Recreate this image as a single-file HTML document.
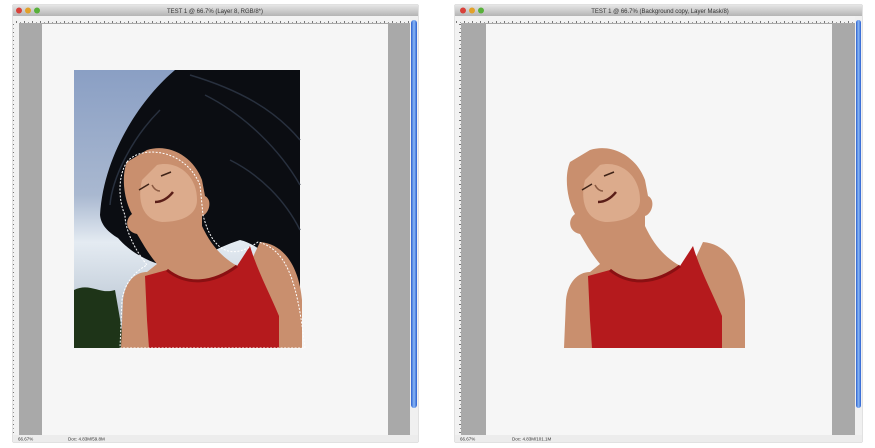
<!DOCTYPE html>
<html><head><meta charset="utf-8"><style>
html,body{margin:0;padding:0;background:#fff;width:875px;height:448px;overflow:hidden}
svg{display:block}
text{font-family:"Liberation Sans",sans-serif}
</style></head><body>
<svg width="875" height="448" viewBox="0 0 875 448" xmlns="http://www.w3.org/2000/svg">
<defs>
<linearGradient id="tb" x1="0" y1="0" x2="0" y2="1"><stop offset="0" stop-color="#e6e6e6"/><stop offset="1" stop-color="#b4b4b4"/></linearGradient>
<linearGradient id="th" x1="0" y1="0" x2="1" y2="0"><stop offset="0" stop-color="#2a5fd0"/><stop offset=".5" stop-color="#8ab8f5"/><stop offset="1" stop-color="#2a5fd0"/></linearGradient>
<linearGradient id="sky" x1="0" y1="0" x2="0" y2="1"><stop offset="0" stop-color="#8a9fc4"/><stop offset=".45" stop-color="#a9b8d0"/><stop offset=".62" stop-color="#e4ebf2"/><stop offset=".8" stop-color="#c9d3de"/><stop offset="1" stop-color="#9aa6b0"/></linearGradient>
<pattern id="rul" width="8" height="8" patternUnits="userSpaceOnUse"><rect width="8" height="8" fill="#f2f2f2"/><rect x="0" y="5" width="1" height="3" fill="#777"/><rect x="4" y="6" width="1" height="2" fill="#999"/></pattern>
<pattern id="rulv" width="8" height="8" patternUnits="userSpaceOnUse"><rect width="8" height="8" fill="#f2f2f2"/><rect y="0" x="3" height="1" width="3" fill="#777"/><rect y="4" x="4" height="1" width="2" fill="#999"/></pattern>
<g id="person">
<path d="M590,150 C612,143 636,156 645,180 L648,196 C656,200 652,214 645,216 L645,226 C656,250 672,264 690,270 L703,242 C728,244 742,268 745,300 L745,348 L564,348 L566,300 C568,282 578,272 590,272 L600,264 C590,252 585,242 580,234 C569,232 567,220 575,214 C567,200 564,176 570,162 Z" fill="#c98f6e"/>
<path d="M600,165 C620,160 640,175 640,200 C640,215 625,222 605,222 C585,220 580,200 585,180 Z" fill="#dcab8c"/>
<path d="M588,276 L610,270 C630,286 656,284 680,266 L693,246 C700,270 712,292 722,316 L722,348 L592,348 L590,320 Z" fill="#b51a1d"/>
<path d="M610,270 C630,286 656,284 680,266" stroke="#8a1012" stroke-width="3" fill="none"/>
<path d="M582,190 l10,-6 M604,176 l10,-4" stroke="#402418" stroke-width="1.5"/>
<path d="M598,202 q10,0 18,-10" stroke="#5a1e18" stroke-width="2.5" fill="none"/>
<path d="M595,185 q3,6 8,6" stroke="#8a5a42" stroke-width="1.5" fill="none"/>
</g>
</defs>

<!-- LEFT WINDOW -->
<rect x="13" y="5" width="405" height="437" fill="#a8a8a8" stroke="#888" stroke-width=".5"/>
<rect x="13" y="5" width="405" height="11" fill="url(#tb)"/>
<circle cx="19" cy="10.5" r="3" fill="#d9413a"/><circle cx="28" cy="10.5" r="3" fill="#e2a12a"/><circle cx="37" cy="10.5" r="3" fill="#58b03a"/>
<text x="215" y="13" font-size="6" fill="#333" text-anchor="middle">TEST 1 @ 66.7% (Layer 8, RGB/8*)</text>
<rect x="13" y="16" width="397" height="7" fill="url(#rul)"/>
<rect x="13" y="23" width="6" height="412" fill="url(#rulv)"/>
<rect x="19" y="23" width="391" height="412" fill="#a9a9a9"/>
<rect x="42" y="24" width="346" height="411" fill="#f6f6f6"/>
<rect x="410" y="16" width="8" height="419" fill="#f0f0f0"/>
<rect x="411" y="20" width="6" height="388" rx="3" fill="url(#th)"/>
<rect x="13" y="435" width="405" height="7" fill="#ececec"/>
<text x="18" y="440.5" font-size="4.5" fill="#333">66.67%</text>
<text x="68" y="440.5" font-size="4.5" fill="#333">Doc: 4.83M/59.8M</text>
<!-- photo -->
<rect x="74" y="70" width="226" height="278" fill="url(#sky)"/>
<path d="M74,290 C90,282 100,295 115,290 L125,348 L74,348 Z" fill="#1e3418"/>
<path d="M100,215 C104,150 145,95 175,70 L300,70 L300,300 C285,270 262,245 240,240 C215,248 195,262 175,268 C150,264 130,252 118,238 C108,232 101,225 100,215 Z" fill="#0b0d12"/>
<path d="M190,75 C240,90 275,110 300,140 M205,95 C245,115 280,150 300,185 M230,160 C260,175 285,200 300,230 M110,205 C112,180 130,140 160,110" stroke="#28303e" stroke-width="1.5" fill="none"/>
<use href="#person" transform="translate(-443,0)"/>
<path d="M127,162 C140,145 185,148 200,185 L203,215 C212,250 230,262 258,242 C290,250 298,290 305,348 L120,348 L122,300 C125,280 138,270 147,265 C135,250 125,230 125,215 C118,200 118,175 127,162 Z" fill="none" stroke="#fff" stroke-width="1" stroke-dasharray="2,1.5"/>

<!-- RIGHT WINDOW -->
<rect x="455" y="5" width="407" height="437" fill="#a8a8a8" stroke="#888" stroke-width=".5"/>
<rect x="455" y="5" width="407" height="11" fill="url(#tb)"/>
<circle cx="463" cy="10.5" r="3" fill="#d9413a"/><circle cx="472" cy="10.5" r="3" fill="#e2a12a"/><circle cx="481" cy="10.5" r="3" fill="#58b03a"/>
<text x="660" y="13" font-size="6" fill="#333" text-anchor="middle">TEST 1 @ 66.7% (Background copy, Layer Mask/8)</text>
<rect x="455" y="16" width="400" height="7" fill="url(#rul)"/>
<rect x="455" y="23" width="6" height="412" fill="url(#rulv)"/>
<rect x="461" y="23" width="394" height="412" fill="#a9a9a9"/>
<rect x="486" y="24" width="346" height="411" fill="#f6f6f6"/>
<rect x="855" y="16" width="7" height="419" fill="#f0f0f0"/>
<rect x="856" y="20" width="5" height="388" rx="2.5" fill="url(#th)"/>
<rect x="455" y="435" width="407" height="7" fill="#ececec"/>
<text x="460" y="440.5" font-size="4.5" fill="#333">66.67%</text>
<text x="512" y="440.5" font-size="4.5" fill="#333">Doc: 4.83M/101.1M</text>
<use href="#person"/>
</svg>
</body></html>
